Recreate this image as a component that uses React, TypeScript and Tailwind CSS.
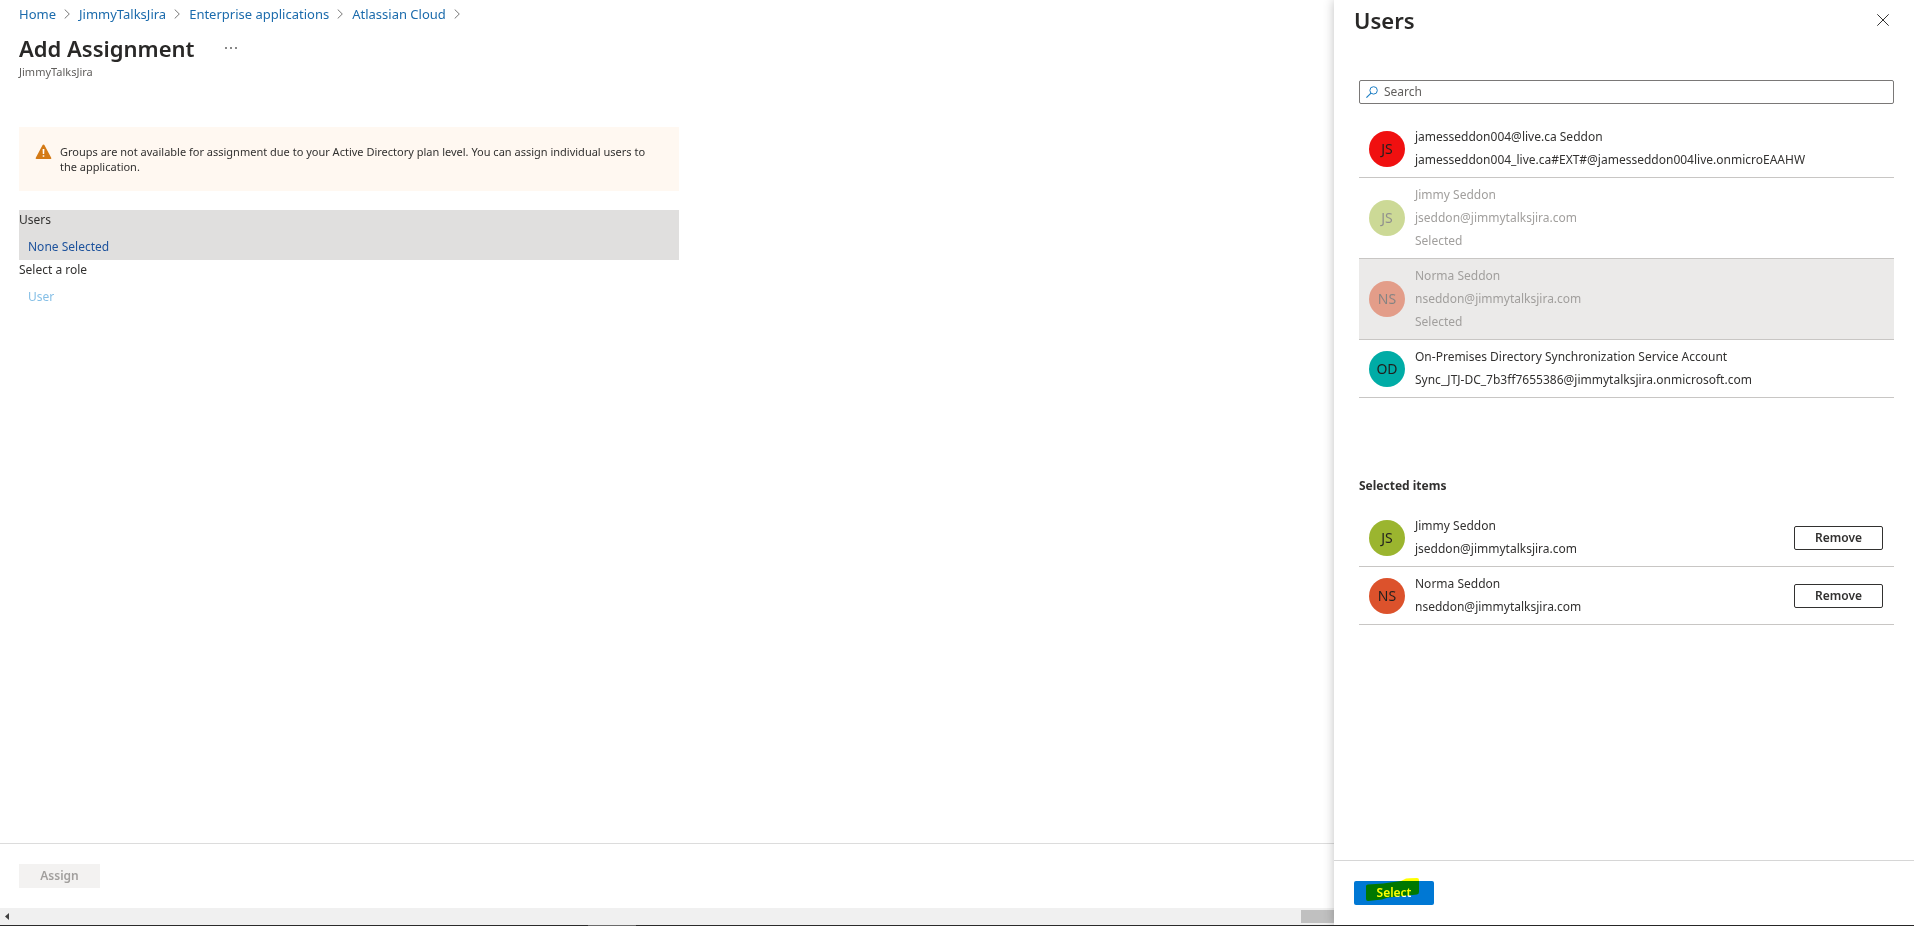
import React from "react";
import clsx from "clsx";

interface Person {
  initials: string;
  name: string;
  email: string;
  color: string;
  selected?: boolean;
  active?: boolean;
}

const breadcrumbs = ["Home", "JimmyTalksJira", "Enterprise applications", "Atlassian Cloud"];

const people: Person[] = [
  {
    initials: "JS",
    name: "jamesseddon004@live.ca Seddon",
    email: "jamesseddon004_live.ca#EXT#@jamesseddon004live.onmicroEAAHW",
    color: "bg-[#f01010]",
  },
  {
    initials: "JS",
    name: "Jimmy Seddon",
    email: "jseddon@jimmytalksjira.com",
    color: "bg-[#9bb52f]",
    selected: true,
  },
  {
    initials: "NS",
    name: "Norma Seddon",
    email: "nseddon@jimmytalksjira.com",
    color: "bg-[#dc522c]",
    selected: true,
    active: true,
  },
  {
    initials: "OD",
    name: "On-Premises Directory Synchronization Service Account",
    email: "Sync_JTJ-DC_7b3ff7655386@jimmytalksjira.onmicrosoft.com",
    color: "bg-[#00aca6]",
  },
];

export default function App() {
  return (
    <div className="flex h-screen flex-col overflow-hidden bg-white font-['Noto_Sans','Open_Sans',sans-serif] text-xs text-[#323130]">
      <div className="flex min-h-0 flex-1">
        <AssignmentPage />
        <UsersPanel />
      </div>
      <div className="flex h-px bg-[#2b2b2b]">
        <div className="ml-[588px] w-12 bg-[#6b6b6b]" />
      </div>
    </div>
  );
}

function AssignmentPage() {
  return (
    <div className="flex min-w-0 flex-1 flex-col">
      <header className="px-[19px] pt-1">
        <nav aria-label="Breadcrumb">
          <ol className="flex items-center text-[13px] leading-5">
            {breadcrumbs.map((crumb) => (
              <li key={crumb} className="flex items-center">
                <a href="#" className="text-[#1b6bac]">
                  {crumb}
                </a>
                <ChevronIcon className="mr-[9px] ml-2 h-2.5 w-1.5 text-[#777]" />
              </li>
            ))}
          </ol>
        </nav>
        <div className="mt-2 flex items-center gap-[30px]">
          <h1 className="text-[22px] leading-8 font-semibold text-[#292827]">Add Assignment</h1>
          <button type="button" aria-label="More actions" className="flex gap-[3px]">
            <span className="h-0.5 w-0.5 bg-[#888]" />
            <span className="h-0.5 w-0.5 bg-[#888]" />
            <span className="h-0.5 w-0.5 bg-[#888]" />
          </button>
        </div>
        <p className="text-[11px] leading-4 text-[#605e5c]">JimmyTalksJira</p>
      </header>

      <main className="w-full max-w-[698px] flex-1 px-[19px] pt-[47px]">
        <div role="alert" className="flex gap-2 bg-[#fff8f1] pt-[17px] pr-4 pb-[17px] pl-4">
          <WarningIcon className="h-4 w-[17px] shrink-0" />
          <p className="text-[11px] leading-[15px]">
            Groups are not available for assignment due to your Active Directory plan level. You can assign
            individual users to the application.
          </p>
        </div>

        <section className="mt-[19px] bg-[#e0dfde]">
          <h2 className="leading-5">Users</h2>
          <button type="button" className="block h-[30px] px-[9px] pt-1 text-[#1d529c]">
            None Selected
          </button>
        </section>
        <section>
          <h2 className="leading-5">Select a role</h2>
          <button type="button" disabled className="block h-[30px] px-[9px] pt-1 text-[#85bfe6]">
            User
          </button>
        </section>
      </main>

      <footer className="border-t border-[#dcdcdc] px-[19px] py-5">
        <button
          type="button"
          disabled
          className="block h-6 w-[81px] bg-[#f3f2f1] font-semibold text-[#a19f9d]"
        >
          Assign
        </button>
      </footer>

      <div className="flex h-[17px] items-center justify-between bg-[#f0f0f0] pl-[5px]" aria-hidden="true">
        <svg className="h-[7px] w-1" viewBox="0 0 4 7">
          <path d="M4 0v7L0 3.5z" fill="#404040" />
        </svg>
        <div className="h-[13px] w-[33px] bg-[#c0c0c0]" />
      </div>
    </div>
  );
}

function UsersPanel() {
  return (
    <aside
      className="relative flex w-[580px] shrink-0 flex-col bg-white shadow-[0_0_10px_rgba(0,0,0,0.25)]"
      aria-label="Users"
    >
      <header className="flex items-center justify-between pt-1 pr-[25px] pl-5">
        <h2 className="text-[22px] leading-8 font-semibold text-[#292827]">Users</h2>
        <button type="button" aria-label="Close">
          <CloseIcon className="h-3 w-3 text-[#323130]" />
        </button>
      </header>

      <div className="flex-1 pt-11 pr-5 pl-[25px]">
        <label className="flex h-6 items-center gap-1.5 rounded-xs border border-[#7a7877] px-1.5">
          <SearchIcon className="h-3 w-3 shrink-0 text-[#1f7fc4]" />
          <input
            type="text"
            aria-label="Search"
            placeholder="Search"
            className="w-full bg-transparent outline-none placeholder:text-[#605e5c]"
          />
        </label>

        <ul className="mt-4">
          {people.map((person) => (
            <PersonRow key={person.email} person={person} dimmed={person.selected} />
          ))}
        </ul>

        <h3 className="mt-[78px] leading-5 font-bold">Selected items</h3>
        <ul className="mt-[13px]">
          {people
            .filter((person) => person.selected)
            .map((person) => (
              <PersonRow key={person.email} person={person} removable />
            ))}
        </ul>
      </div>

      <footer className="border-t border-[#d6d6d6] px-5 py-5">
        <div className="relative w-20">
          <button
            type="button"
            className="block h-6 w-full rounded-xs bg-[#0078d4] font-semibold text-white"
          >
            Select
          </button>
          <Highlight className="pointer-events-none absolute -top-1 left-3 h-6 w-[53px] mix-blend-multiply" />
        </div>
      </footer>
    </aside>
  );
}

interface PersonRowProps {
  person: Person;
  dimmed?: boolean;
  removable?: boolean;
}

function PersonRow({ person, dimmed, removable }: PersonRowProps) {
  return (
    <li
      className={clsx(
        "flex items-center gap-2.5 border-b border-[#c8c6c4] py-[5px] pr-[11px] pl-2.5",
        dimmed && person.active && "bg-[#ebeae9]"
      )}
    >
      <span
        className={clsx(
          "flex h-9 w-9 shrink-0 items-center justify-center rounded-full text-sm text-[#201f1e]",
          person.color,
          dimmed && "opacity-50"
        )}
      >
        {person.initials}
      </span>
      <div className={clsx("min-w-0 flex-1 pb-px leading-[23px]", dimmed && "text-[#a19f9d]")}>
        <p>{person.name}</p>
        <p>{person.email}</p>
        {dimmed && <p>Selected</p>}
      </div>
      {removable && (
        <button
          type="button"
          className="h-6 w-[89px] rounded-xs border border-[#323130] bg-white font-semibold"
        >
          Remove
        </button>
      )}
    </li>
  );
}

function ChevronIcon({ className }: { className?: string }) {
  return (
    <svg className={className} fill="none" stroke="currentColor" viewBox="0 0 6 10" aria-hidden="true">
      <path d="M0.7 0.5L5.3 5L0.7 9.5" />
    </svg>
  );
}

function CloseIcon({ className }: { className?: string }) {
  return (
    <svg className={className} fill="none" stroke="currentColor" viewBox="0 0 12 12" aria-hidden="true">
      <path d="M0.3 0.3l11.4 11.4M11.7 0.3L0.3 11.7" />
    </svg>
  );
}

function SearchIcon({ className }: { className?: string }) {
  return (
    <svg className={className} fill="none" stroke="currentColor" viewBox="0 0 12 12" aria-hidden="true">
      <circle cx="7.6" cy="4.4" r="3.7" />
      <path d="M5 7.1L0.4 11.6" strokeWidth={1.2} />
    </svg>
  );
}

function WarningIcon({ className }: { className?: string }) {
  return (
    <svg className={className} viewBox="0 0 17 16" aria-hidden="true">
      <path
        d="M7.6 1.1a1 1 0 011.8 0l6.8 12.6a.9.9 0 01-.8 1.3H1.6a.9.9 0 01-.8-1.3z"
        fill="#d47a16"
      />
      <path d="M7.6 5h1.8l-.2 5H7.8zM7.7 11.2h1.6v1.6H7.7z" fill="#fff" />
    </svg>
  );
}

function Highlight({ className }: { className?: string }) {
  return (
    <svg className={className} viewBox="0 0 53 24" preserveAspectRatio="none" aria-hidden="true">
      <path
        d="M0 9Q0 7.500 2 7.500L17 6.500L35 4L40 1.500Q42 1 51 1Q53 1 53 3V15Q53 17 51 17.500L38 19L22 20.500L16 22.500L2 24Q0 24 0 22Z"
        fill="#ffff00"
      />
    </svg>
  );
}
